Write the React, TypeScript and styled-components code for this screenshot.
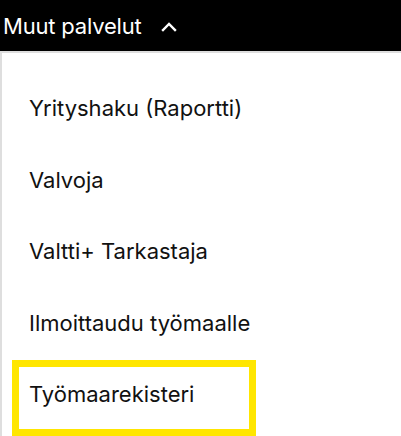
import styled, { createGlobalStyle } from "styled-components";

const GlobalStyle = createGlobalStyle`
  html, body {
    margin: 0;
    padding: 0;
    background: #ffffff;
  }
  body {
    font-family: Inter, "Noto Sans", "Liberation Sans", sans-serif;
    color: #111111;
  }
`;

const Header = styled.button`
  display: flex;
  align-items: center;
  gap: 20px;
  width: 100%;
  height: 51px;
  padding: 0 0 0 3px;
  margin: 0;
  border: none;
  background: #000000;
  color: #ffffff;
  font-family: inherit;
  font-size: 22px;
  letter-spacing: -0.2px;
  cursor: pointer;
`;

const Panel = styled.ul`
  list-style: none;
  margin: 0;
  padding: 28px 0 7px 0;
  border-top: 2px solid #dedede;
  border-left: 2px solid #dedede;
`;

const Item = styled.li`
  margin-bottom: 9.5px;

  &:last-child {
    margin-bottom: 0;
  }
`;

const Link = styled.a<{ $focused?: boolean }>`
  display: block;
  box-sizing: border-box;
  width: 230px;
  height: 62px;
  margin-left: 17px;
  padding: 13px 10px 20px;
  outline: ${(p) => (p.$focused ? "7px solid #ffe600" : "none")};
  font-size: 22px;
  line-height: 29px;
  color: #111111;
  text-decoration: none;
  white-space: nowrap;
`;

const Chevron = () => (
  <svg width="16" height="12" viewBox="0 0 16 12" fill="none">
    <polyline
      points="2,10 8,4 14,10"
      stroke="#ffffff"
      strokeWidth="2.4"
      strokeLinecap="square"
      strokeLinejoin="miter"
    />
  </svg>
);

const items = [
  "Yrityshaku (Raportti)",
  "Valvoja",
  "Valtti+ Tarkastaja",
  "Ilmoittaudu työmaalle",
  "Työmaarekisteri",
];

export default function App() {
  return (
    <>
      <GlobalStyle />
      <Header>
        Muut palvelut
        <Chevron />
      </Header>
      <Panel>
        {items.map((label, i) => (
          <Item key={label}>
            <Link href="#" $focused={i === items.length - 1}>
              {label}
            </Link>
          </Item>
        ))}
      </Panel>
    </>
  );
}
